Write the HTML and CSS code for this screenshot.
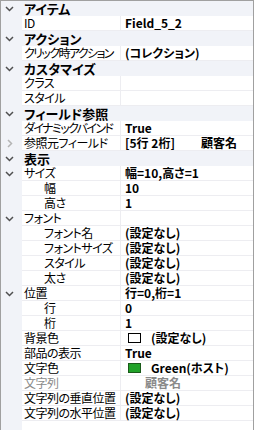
FILE: index.html
```html
<!DOCTYPE html>
<html lang="ja">
<head>
    <meta charset="UTF-8">
    <title>プロパティ</title>
    <link rel="stylesheet" href="styles.css">
</head>
<body>
    <div class="grid">
        <div class="row cat"><span class="gut"><svg class="chev" width="9" height="6"><path d="M1 1 L4.5 4.5 L8 1"/></svg></span><span class="cat-name">アイテム</span></div>
        <div class="row"><span class="gut"></span><span class="name">ID</span><span class="val">Field_5_2</span></div>

        <div class="row cat"><span class="gut"><svg class="chev" width="9" height="6"><path d="M1 1 L4.5 4.5 L8 1"/></svg></span><span class="cat-name">アクション</span></div>
        <div class="row"><span class="gut"></span><span class="name tight">クリック時アクション</span><span class="val">(コレクション)</span></div>

        <div class="row cat"><span class="gut"><svg class="chev" width="9" height="6"><path d="M1 1 L4.5 4.5 L8 1"/></svg></span><span class="cat-name">カスタマイズ</span></div>
        <div class="row"><span class="gut"></span><span class="name">クラス</span><span class="val"></span></div>
        <div class="row"><span class="gut"></span><span class="name">スタイル</span><span class="val"></span></div>

        <div class="row cat"><span class="gut"><svg class="chev" width="9" height="6"><path d="M1 1 L4.5 4.5 L8 1"/></svg></span><span class="cat-name">フィールド参照</span></div>
        <div class="row"><span class="gut"></span><span class="name tight">ダイナミックバインド</span><span class="val">True</span></div>
        <div class="row"><span class="gut"><svg class="chev-r" width="6" height="9"><path d="M1 1 L4.5 4.5 L1 8"/></svg></span><span class="name">参照元フィールド</span><span class="val">[5行 2桁]<span class="ref">顧客名</span></span></div>

        <div class="row cat"><span class="gut"><svg class="chev" width="9" height="6"><path d="M1 1 L4.5 4.5 L8 1"/></svg></span><span class="cat-name">表示</span></div>
        <div class="row"><span class="gut"><svg class="chev" width="9" height="6"><path d="M1 1 L4.5 4.5 L8 1"/></svg></span><span class="name">サイズ</span><span class="val">幅=10,高さ=1</span></div>
        <div class="row"><span class="gut"></span><span class="name sub">幅</span><span class="val">10</span></div>
        <div class="row"><span class="gut"></span><span class="name sub">高さ</span><span class="val">1</span></div>
        <div class="row"><span class="gut"><svg class="chev" width="9" height="6"><path d="M1 1 L4.5 4.5 L8 1"/></svg></span><span class="name">フォント</span><span class="val"></span></div>
        <div class="row"><span class="gut"></span><span class="name sub">フォント名</span><span class="val">(設定なし)</span></div>
        <div class="row"><span class="gut"></span><span class="name sub">フォントサイズ</span><span class="val">(設定なし)</span></div>
        <div class="row"><span class="gut"></span><span class="name sub">スタイル</span><span class="val">(設定なし)</span></div>
        <div class="row"><span class="gut"></span><span class="name sub">太さ</span><span class="val">(設定なし)</span></div>
        <div class="row"><span class="gut"><svg class="chev" width="9" height="6"><path d="M1 1 L4.5 4.5 L8 1"/></svg></span><span class="name">位置</span><span class="val">行=0,桁=1</span></div>
        <div class="row"><span class="gut"></span><span class="name sub">行</span><span class="val">0</span></div>
        <div class="row"><span class="gut"></span><span class="name sub">桁</span><span class="val">1</span></div>
        <div class="row"><span class="gut"></span><span class="name">背景色</span><span class="val"><span class="swatch white"></span>(設定なし)</span></div>
        <div class="row"><span class="gut"></span><span class="name">部品の表示</span><span class="val">True</span></div>
        <div class="row"><span class="gut"></span><span class="name">文字色</span><span class="val"><span class="swatch green"></span>Green(ホスト)</span></div>
        <div class="row"><span class="gut"></span><span class="name dim">文字列</span><span class="val dim"><span class="ref-dim">顧客名</span></span></div>
        <div class="row"><span class="gut"></span><span class="name">文字列の垂直位置</span><span class="val">(設定なし)</span></div>
        <div class="row"><span class="gut"></span><span class="name">文字列の水平位置</span><span class="val">(設定なし)</span></div>

        <div class="row fill"><span class="gut"></span><span class="blank"></span></div>
    </div>
</body>
</html>
```

FILE: styles.css
```css
body {
    margin: 0;
    background-color: #fff;
    font-family: "Noto Sans CJK JP", sans-serif;
    font-size: 12px;
    font-feature-settings: "palt";
    color: #000;
}
.grid {
    width: 254px;
    height: 430px;
    box-sizing: border-box;
    border: 1px solid #a0a0a0;
    border-bottom: none;
    display: flex;
    flex-direction: column;
    overflow: hidden;
}
.row {
    display: flex;
    height: 15px;
    flex: none;
    line-height: 14px;
}
.gut {
    width: 21px;
    flex: none;
    background-color: #f1f3f8;
    display: flex;
    align-items: center;
    padding-left: 4px;
    box-sizing: border-box;
}
.chev path, .chev-r path {
    fill: none;
    stroke-width: 1.5;
}
.chev path {
    stroke: #505050;
}
.chev-r {
    margin-left: 2px;
}
.chev-r path {
    stroke: #b4b4b4;
}
.cat {
    background-color: #f1f3f8;
}
.cat-name {
    padding-left: 2px;
    font-weight: bold;
    font-size: 13px;
    line-height: 15px;
}
.name {
    width: 99px;
    flex: none;
    padding-left: 2px;
    box-sizing: border-box;
    border-bottom: 1px solid #ededf1;
    border-right: 1px solid #ededf1;
    white-space: nowrap;
    letter-spacing: -0.5px;
}
.name.tight {
    letter-spacing: -1.6px;
}
.name.sub {
    padding-left: 22px;
}
.val {
    flex: 1;
    padding-left: 4px;
    font-weight: bold;
    border-bottom: 1px solid #ededf1;
    white-space: nowrap;
    display: flex;
    align-items: center;
}
.dim {
    color: #8a8a8a;
}
.ref {
    margin-left: 26px;
}
.ref-dim {
    margin-left: 20px;
}
.swatch {
    width: 13px;
    height: 10px;
    box-sizing: border-box;
    border: 1px solid #000;
    margin-left: 3px;
    margin-right: 10px;
}
.swatch.white {
    background-color: #fff;
}
.swatch.green {
    background-color: #21a229;
    border-color: #1a5a1a;
}
.fill {
    flex: 1;
}
.blank {
    flex: 1;
}
```
